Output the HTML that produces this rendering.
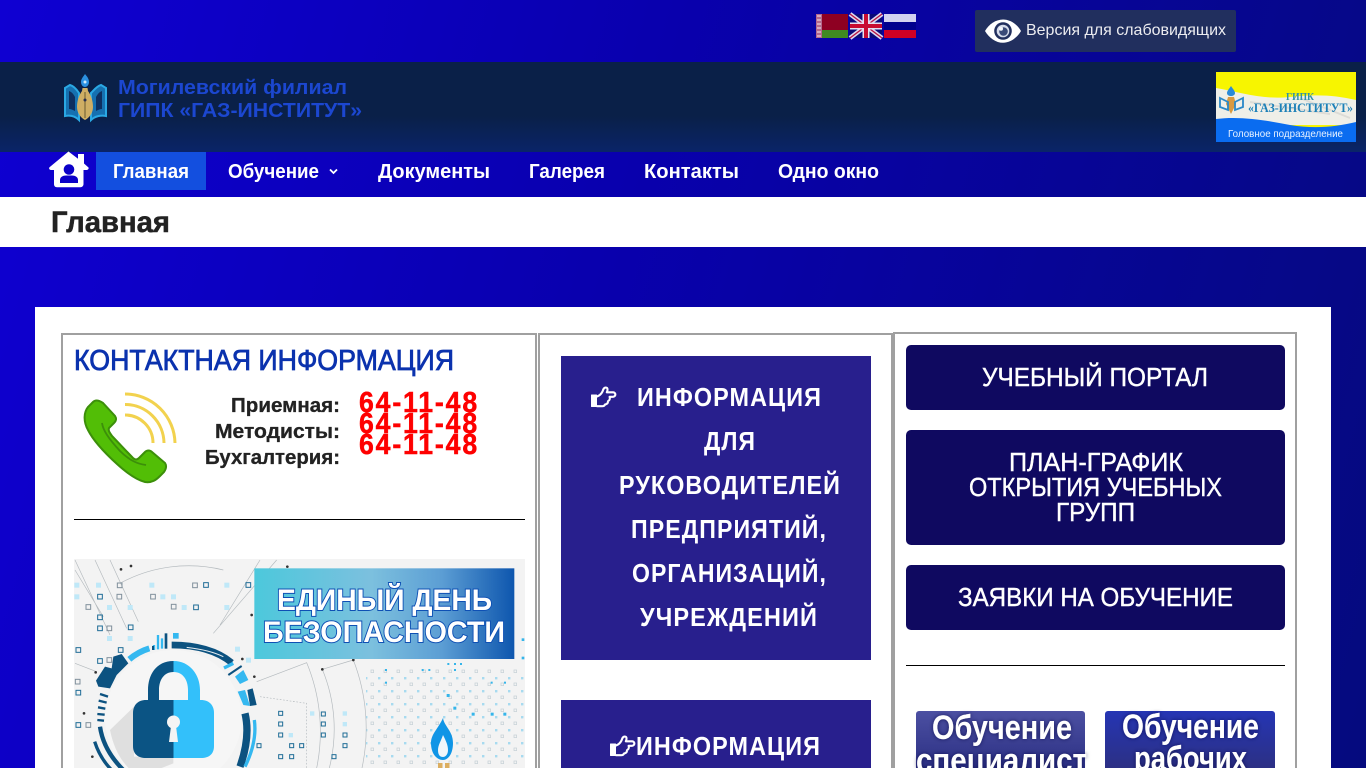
<!DOCTYPE html>
<html lang="ru"><head><meta charset="utf-8"><title>Главная</title>
<style>
html,body{margin:0;padding:0;width:1366px;height:768px;overflow:hidden}
body{position:relative;background:linear-gradient(105deg,#0f00d2 0%,#0900ae 42%,#050a7e 100%);font-family:"Liberation Sans",sans-serif}
.b{position:absolute;box-sizing:border-box}
svg.o{position:absolute;left:0;top:0}
svg text{font-family:"Liberation Sans",sans-serif}
</style></head><body>
<div class="b" style="left:975px;top:10px;width:261px;height:42px;background:#212f5e;border-radius:2px"></div>
<header class="b" style="left:0;top:62px;width:1366px;height:90px;background:linear-gradient(180deg,#0a2048 0%,#0a2048 60%,#0a2468 100%)"></header>
<nav class="b" style="left:96px;top:152px;width:110px;height:38px;background:#134fdf"></nav>
<div class="b" style="left:0;top:197px;width:1366px;height:50px;background:#fff"></div>
<main class="b" style="left:35px;top:307px;width:1296px;height:461px;background:#fff"></main>
<div class="b" style="left:61px;top:333px;width:476px;height:440px;border:2px solid #a0a0a0"></div>
<div class="b" style="left:538px;top:333px;width:355px;height:440px;border:2px solid #a0a0a0"></div>
<div class="b" style="left:893px;top:332px;width:404px;height:440px;border:2px solid #a0a0a0"></div>
<div class="b" style="left:74px;top:519px;width:451px;height:1px;background:#000"></div>
<div class="b" style="left:561px;top:356px;width:310px;height:304px;background:#281f8d"></div>
<div class="b" style="left:561px;top:700px;width:310px;height:68px;background:#281f8d"></div>
<div class="b" style="left:906px;top:345px;width:379px;height:65px;background:#0f0960;border-radius:5px"></div>
<div class="b" style="left:906px;top:430px;width:379px;height:115px;background:#0f0960;border-radius:5px"></div>
<div class="b" style="left:906px;top:565px;width:379px;height:65px;background:#0f0960;border-radius:5px"></div>
<div class="b" style="left:906px;top:665px;width:379px;height:1px;background:#000"></div>
<div class="b" style="left:916px;top:711px;width:169px;height:57px;background:linear-gradient(180deg,#4c50a2,#2c3084);border-radius:3px 3px 0 0"></div>
<div class="b" style="left:1105px;top:711px;width:170px;height:57px;background:linear-gradient(180deg,#2535b4,#2c3084);border-radius:3px 3px 0 0"></div>

<svg class="o" width="1366" height="768" viewBox="0 0 1366 768" xmlns="http://www.w3.org/2000/svg">
<defs>
<linearGradient id="ban" x1="0" x2="1" y1="0" y2="0"><stop offset="0" stop-color="#4cc8dc"/><stop offset=".45" stop-color="#7cc0de"/><stop offset=".72" stop-color="#5c9ed4"/><stop offset="1" stop-color="#0e56ae"/></linearGradient>
<clipPath id="imgc"><rect x="74" y="559" width="451" height="209"/></clipPath>
<clipPath id="bn"><rect x="1216" y="72" width="140" height="70"/></clipPath>
<filter id="gl" x="-10%" y="-30%" width="120%" height="160%"><feDropShadow dx="0" dy="0" stdDeviation="2" flood-color="#101040" flood-opacity=".7"/></filter>
<filter id="sb"><feGaussianBlur stdDeviation=".35"/></filter>
<pattern id="dots2" width="13" height="13" patternUnits="userSpaceOnUse"><rect x="1" y="1" width="2.400" height="2.400" fill="#35b5ea"/><rect x="7" y="7" width="2.600" height="2.600" fill="none" stroke="#7f99a8" stroke-width=".7"/></pattern>
<g id="hand" fill="none" stroke="#fff" stroke-linejoin="round" stroke-linecap="round">
<rect x="0.5" y="9" width="5" height="11.5" fill="#fff" stroke-width="1"/>
<path stroke-width="2.1" d="M6 10.5C9 9.500 10.500 7.500 11.500 5.500C12.200 3.500 12.800 1.500 14.800 1.500C16.800 1.600 17 3.800 15.800 6.300H22.300C25.200 6.600 25 10.600 22 10.800H18.600C19.400 12.800 18.400 14.600 17 15.200C17 17.200 15.800 18.200 14.200 18.400C13.400 20 12 20.400 10.400 20.200H6"/>
</g>
</defs>

<!-- flags -->
<rect x="816" y="14" width="32" height="16" fill="#8e0022"/><rect x="816" y="30" width="32" height="8" fill="#3f8a22"/>
<rect x="816" y="14" width="6" height="24" fill="#b4688c"/>
<path d="M817 16h4M817 20h4M817 24h4M817 28h4M817 32h4M817 36h4" stroke="#e8d0dc" stroke-width="1.2"/>
<rect x="850" y="14" width="32" height="24" fill="#0a0a78"/>
<path d="M850 14L882 38M882 14L850 38" stroke="#dcd8ee" stroke-width="4.500"/>
<path d="M850 14L882 38M882 14L850 38" stroke="#b81040" stroke-width="1.300"/>
<path d="M866 14V38M850 26H882" stroke="#e4e0f0" stroke-width="7"/>
<path d="M866 14V38M850 26H882" stroke="#c80c30" stroke-width="4"/>
<rect x="884" y="14" width="32" height="8" fill="#d2d2f0"/><rect x="884" y="22" width="32" height="8" fill="#00008e"/><rect x="884" y="30" width="32" height="8" fill="#d00024"/>

<!-- eye -->
<path d="M985 31C989 24 996 19.500 1003 19.500C1010 19.500 1017 24 1021 31C1017 38 1010 42.800 1003 42.800C996 42.800 989 38 985 31Z" fill="#fff"/>
<circle cx="1003" cy="31" r="8.800" fill="#212f5e"/><circle cx="1003" cy="31" r="6.300" fill="#d6dceb"/><circle cx="1003.500" cy="31.500" r="4.300" fill="#3a4a78"/><circle cx="1001" cy="28.800" r="2" fill="#f2f5fb"/>
<text x="1026" y="35" font-size="16" fill="#ececf0" textLength="200" lengthAdjust="spacingAndGlyphs">Версия для слабовидящих</text>

<!-- logo -->
<g>
<path d="M65 88L70 85C74 86 77 90 79 93V120C75 116 70 115 65 116Z" fill="#1670b0" stroke="#2aa8e4" stroke-width="2"/>
<path d="M106 88L101 85C97 86 94 90 91 93V120C95 116 101 115 106 116Z" fill="#1670b0" stroke="#2aa8e4" stroke-width="2"/>
<path d="M69 91C72 92 74 95 75 97V111C73 110 71 109 69 109Z" fill="#0e2f60"/>
<path d="M102 91C99 92 97 95 96 97V111C98 110 100 109 102 109Z" fill="#0e2f60"/>
<path d="M85 74C87.500 77 89 79 89 82C89 85 87 87 85 87C83 87 81 85 81 82C81 79 83 77 85 74Z" fill="#2b8fe0"/>
<circle cx="85" cy="82" r="1.500" fill="#cfe8fa"/>
<path d="M82.500 88H87.500L88 91C91 95 93 101 93 107C93 113 89 118 85 120C81 118 77 113 77 107C77 101 79 95 82 91Z" fill="#cfae64"/>
<path d="M85 92V118" stroke="#6a5a30" stroke-width="1"/><circle cx="85" cy="100" r="1.500" fill="#2a3050"/>
</g>
<g filter="url(#sb)">
<text x="118" y="94" font-size="20" font-weight="700" fill="#1a46d0" textLength="229" lengthAdjust="spacingAndGlyphs">Могилевский филиал</text>
<text x="118" y="117" font-size="20.500" font-weight="700" fill="#1a46d0" textLength="244" lengthAdjust="spacingAndGlyphs">ГИПК «ГАЗ-ИНСТИТУТ»</text>
</g>

<!-- right banner -->
<g clip-path="url(#bn)">
<rect x="1216" y="72" width="140" height="70" fill="#f7f500"/>
<path d="M1216 88C1240 92 1262 100 1290 97C1315 94 1335 95 1356 100V125H1216Z" fill="#efefe8"/>
<path d="M1250 102L1330 114M1300 98L1350 118" stroke="#d4d4d0" stroke-width="2" opacity=".7"/>
<path d="M1216 119C1240 116 1265 120 1290 125C1315 129 1335 127 1356 122V142H1216Z" fill="#0a6cf0"/>
<path d="M1231 86C1233 89 1235 91 1235 93C1235 95 1233 96 1231 96C1229 96 1227 95 1227 93C1227 91 1229 89 1231 86Z" fill="#2a8ad8"/>
<path d="M1228 97H1234L1236 104L1231 114L1226 104Z" fill="#d89a40"/>
<path d="M1220 98L1228 102V110L1220 107ZM1243 98L1235 102V110L1243 107Z" fill="none" stroke="#2a88c8" stroke-width="1.800"/>
<text x="1286" y="100" font-size="10" font-weight="700" fill="#2e90a8" style="font-family:'Liberation Serif',serif" textLength="28" lengthAdjust="spacingAndGlyphs">ГИПК</text>
<text x="1248" y="112" font-size="12.500" font-weight="700" fill="#1c80b8" style="font-family:'Liberation Serif',serif" textLength="105" lengthAdjust="spacingAndGlyphs">«ГАЗ-ИНСТИТУТ»</text>
<text x="1228" y="137" font-size="10.500" fill="#e8f2ff" textLength="115" lengthAdjust="spacingAndGlyphs">Головное подразделение</text>
</g>

<!-- home -->
<path d="M68.500 151.500L78 158.800V154H84V163.500L88.500 167.500C89 168.800 88 170 86.500 170H83.500V184C83.500 186 82 187.200 80.500 187.200H57C55 187.200 54 186 54 184V170H51C49.500 170 48.500 168.500 49.500 167.300Z" fill="#fff"/>
<circle cx="69" cy="169.500" r="5.300" fill="#0b00c8"/>
<path d="M60 183V180C60 177 63 175.500 66 175.500H72C75 175.500 78 177 78 180V183Z" fill="#0b00c8"/>

<!-- nav -->
<g font-size="20" font-weight="700" fill="#fff">
<text x="113" y="178" textLength="76" lengthAdjust="spacingAndGlyphs">Главная</text>
<text x="228" y="178" textLength="91" lengthAdjust="spacingAndGlyphs">Обучение</text>
<text x="378" y="178" textLength="112" lengthAdjust="spacingAndGlyphs">Документы</text>
<text x="529" y="178" textLength="76" lengthAdjust="spacingAndGlyphs">Галерея</text>
<text x="644" y="178" textLength="95" lengthAdjust="spacingAndGlyphs">Контакты</text>
<text x="778" y="178" textLength="101" lengthAdjust="spacingAndGlyphs">Одно окно</text>
</g>
<path d="M330 169.500L333.500 173L337 169.500" fill="none" stroke="#fff" stroke-width="1.800"/>

<text x="51" y="232" font-size="30" font-weight="700" fill="#222" stroke="#222" stroke-width=".5" textLength="119" lengthAdjust="spacingAndGlyphs">Главная</text>

<!-- contact -->
<text x="74" y="370" font-size="29" fill="#0b32ae" stroke="#0b32ae" stroke-width=".8" textLength="380" lengthAdjust="spacingAndGlyphs">КОНТАКТНАЯ ИНФОРМАЦИЯ</text>
<g fill="none" stroke="#f2d24e" stroke-width="3"><path d="M125 415A28 28 0 0 1 153 443"/><path d="M125 404.500A39 39 0 0 1 164 443"/><path d="M125 394A50 50 0 0 1 175 443"/></g>
<path d="M93 402C96 399 100 401 103 403L115 416C117 419 116 421 114 423L109 428C108 431 110 433 112 436L133 458C135 460 137 460 139 458L145 452C147 450 150 450 152 452L165 463C167 466 166 469 164 472L160 476C156 480 152 483 145 482C137 480 128 474 117 464C106 454 94 442 88 430C83 421 84 412 88 407Z" fill="#52be06" stroke="#3c8f0a" stroke-width="2"/>
<path d="M102 423C103 430 108 438 120 451C130 461 138 464 146 465" fill="none" stroke="#3c8f0a" stroke-width="1.800"/>
<g font-size="20.500" font-weight="700" fill="#222" stroke="#222" stroke-width=".3">
<text x="231" y="412" textLength="109" lengthAdjust="spacingAndGlyphs">Приемная:</text>
<text x="215" y="438" textLength="125" lengthAdjust="spacingAndGlyphs">Методисты:</text>
<text x="205" y="464" textLength="135" lengthAdjust="spacingAndGlyphs">Бухгалтерия:</text>
</g>
<g font-size="29" font-weight="700" fill="#fe0000" stroke="#fe0000" stroke-width=".5" style="letter-spacing:2px">
<text x="359" y="412" textLength="120" lengthAdjust="spacingAndGlyphs">64-11-48</text>
<text x="359" y="433" textLength="120" lengthAdjust="spacingAndGlyphs">64-11-48</text>
<text x="359" y="454" textLength="120" lengthAdjust="spacingAndGlyphs">64-11-48</text>
</g>

<!-- safety image -->
<g clip-path="url(#imgc)">
<rect x="74" y="559" width="451" height="209" fill="#f3f3f3"/>
<rect x="366" y="668" width="159" height="100" fill="url(#dots2)" opacity=".4"/>
<g transform="translate(60 550) scale(.33333)">
<g fill="none" stroke="#b4babe" stroke-width="2">
<path d="M787 358A470 470 0 0 1 808 654M880 330A566 566 0 0 1 906 654M590 395L740 338A540 540 0 0 1 770 654"/>
<path d="M105 30L200 235M45 30L150 255M150 30L235 215M650 30L460 250M600 30L480 225M180 100A430 430 0 0 1 490 60M787 358L880 330M45 60L130 200M45 340L110 365"/>
<path d="M600 440L740 460V654" stroke-dasharray="5 5"/>
</g>
<g fill="#333"><circle cx="183" cy="58" r="4"/><circle cx="213" cy="48" r="4"/><circle cx="682" cy="50" r="4"/><circle cx="575" cy="195" r="4"/><circle cx="547" cy="327" r="4"/><circle cx="583" cy="380" r="4"/><circle cx="787" cy="358" r="4"/><circle cx="880" cy="330" r="4"/><circle cx="107" cy="367" r="4"/><circle cx="72" cy="490" r="4"/><circle cx="97" cy="620" r="4"/></g>
<g fill="none" stroke="#80909c" stroke-width="3">
<rect x="172" y="99" width="14" height="14"/><rect x="171" y="133" width="14" height="14"/><rect x="272" y="133" width="14" height="14"/><rect x="398" y="99" width="14" height="14"/><rect x="334" y="163" width="14" height="14"/><rect x="78" y="164" width="14" height="14"/><rect x="141" y="228" width="14" height="14"/><rect x="141" y="323" width="14" height="14"/><rect x="46" y="388" width="14" height="14"/><rect x="78" y="518" width="14" height="14"/>
</g>
<g fill="none" stroke="#1e6c96" stroke-width="3">
<rect x="113" y="133" width="14" height="14"/><rect x="431" y="98" width="14" height="14"/><rect x="558" y="98" width="14" height="14"/><rect x="401" y="165" width="14" height="14"/><rect x="113" y="195" width="14" height="14"/><rect x="113" y="228" width="14" height="14"/><rect x="205" y="225" width="14" height="14"/><rect x="48" y="293" width="14" height="14"/><rect x="175" y="293" width="14" height="14"/><rect x="113" y="326" width="14" height="14"/><rect x="48" y="421" width="14" height="14"/><rect x="48" y="518" width="14" height="14"/><rect x="656" y="484" width="12" height="12"/><rect x="784" y="486" width="12" height="12"/><rect x="656" y="516" width="12" height="12"/><rect x="784" y="516" width="12" height="12"/><rect x="656" y="549" width="12" height="12"/><rect x="784" y="549" width="12" height="12"/><rect x="849" y="549" width="12" height="12"/><rect x="689" y="581" width="12" height="12"/><rect x="719" y="581" width="12" height="12"/><rect x="849" y="581" width="12" height="12"/><rect x="591" y="581" width="12" height="12"/><rect x="656" y="614" width="12" height="12"/><rect x="689" y="614" width="12" height="12"/><rect x="816" y="614" width="12" height="12"/>
</g>
<g fill="#bfe8f8">
<rect x="43" y="98" width="15" height="15"/><rect x="108" y="98" width="15" height="15"/><rect x="43" y="133" width="15" height="15"/><rect x="268" y="98" width="15" height="15"/><rect x="493" y="98" width="15" height="15"/><rect x="301" y="133" width="15" height="15"/><rect x="333" y="133" width="15" height="15"/><rect x="203" y="165" width="15" height="15"/><rect x="365" y="165" width="15" height="15"/><rect x="141" y="165" width="15" height="15"/><rect x="203" y="258" width="15" height="15"/><rect x="141" y="258" width="15" height="15"/><rect x="493" y="165" width="15" height="15"/><rect x="525" y="290" width="15" height="15"/><rect x="558" y="323" width="15" height="15"/><rect x="750" y="484" width="13" height="13"/><rect x="848" y="484" width="13" height="13"/><rect x="848" y="516" width="13" height="13"/><rect x="686" y="549" width="13" height="13"/>
</g>
<g fill="#35b5ea">
<rect x="975" y="357" width="6" height="6"/><rect x="1085" y="357" width="6" height="6"/><rect x="1105" y="357" width="6" height="6"/><rect x="1162" y="339" width="6" height="6"/><rect x="1182" y="339" width="6" height="6"/><rect x="1200" y="339" width="6" height="6"/><rect x="1182" y="357" width="6" height="6"/><rect x="975" y="395" width="6" height="6"/><rect x="1292" y="395" width="6" height="6"/><rect x="1332" y="395" width="6" height="6"/><rect x="1160" y="432" width="9" height="9"/><rect x="1180" y="470" width="9" height="9"/><rect x="1235" y="488" width="9" height="9"/><rect x="1292" y="488" width="9" height="9"/><rect x="1330" y="488" width="9" height="9"/><rect x="1385" y="265" width="8" height="8"/><rect x="1385" y="320" width="8" height="8"/>
</g>
<rect x="583" y="55" width="780" height="272" fill="url(#ban)"/>
<path d="M1363 280v45M1385 283v10" stroke="none"/>
<!-- dial -->
<path d="M335 285Q450 285 515 338" fill="none" stroke="#0c5280" stroke-width="20"/>
<path d="M380 292Q450 300 490 320" fill="none" stroke="#e8eef2" stroke-width="3"/>
<path d="M208 328Q235 305 268 295" fill="none" stroke="#34b8f0" stroke-width="18"/>
<path d="M282 300V285M294 298V255M306 296V265" stroke="#34b8f0" stroke-width="7"/><path d="M318 296V250" stroke="#0c5280" stroke-width="8"/><path d="M279 300V288" stroke="#0c5280" stroke-width="6"/>
<rect x="339" y="249" width="17" height="17" fill="#34b8f0"/>
<polygon points="108,392 135,350 155,355 160,320 185,312 205,340 170,375 150,415 115,410" fill="#0c5280"/>
<path d="M120 432L144 440M116 452L140 458M114 472L136 476M112 492L134 494M112 510L132 512" stroke="#0c5280" stroke-width="7"/>
<path d="M492 354L520 340" stroke="#34b8f0" stroke-width="10"/><path d="M505 375L545 348" stroke="#0c5280" stroke-width="6"/>
<polygon points="525,380 550,360 565,390 540,402" fill="#34b8f0"/>
<polygon points="533,425 555,420 570,468 550,465" fill="#34b8f0"/><polygon points="562,420 578,415 590,465 570,468" fill="#0c5280"/>
<path d="M555 490Q572 560 540 650" fill="none" stroke="#0c5280" stroke-width="22"/>
<path d="M583 510Q592 575 555 650" fill="none" stroke="#34b8f0" stroke-width="10"/>
<path d="M120 530Q130 600 190 660" fill="none" stroke="#0c5280" stroke-width="13"/>
<path d="M104 575Q120 625 155 660" fill="none" stroke="#0c5280" stroke-width="10"/>
<circle cx="340" cy="505" r="205" fill="#f6f6f6"/>
<path d="M222 470L150 540Q170 640 240 680L340 640V620H222Z" fill="#dfdfdf"/>
</g>
<path d="M173.500 661C156 661 148 675 148 690V702H159V690C159 680 164 672 173.500 672Z" fill="#0b5484"/>
<path d="M173.500 661C190 661 200 675 200 690V702H188V690C188 680 183 672 173.500 672Z" fill="#33c0fa"/>
<path d="M173.500 700H146C138 700 133 705 133 713V746C133 754 138 758 146 758H173.500Z" fill="#0b5484"/>
<path d="M173.500 700H201C209 700 214 705 214 713V746C214 754 209 758 201 758H173.500Z" fill="#33c0fa"/>
<circle cx="173.500" cy="722" r="6.500" fill="#f4f4f4"/><path d="M171 726H176L178 742H169Z" fill="#f4f4f4"/>
<path d="M443 718C444 726 453 731 453 743C453 754 448 760 443 760C437 760 431 754 431 743C431 734 438 729 443 718Z" fill="#0f95e6"/>
<path d="M443 735C446 741 448 745 448 750C448 755 445 757 443 757C440 757 438 755 438 750C438 745 441 741 443 735Z" fill="#f0f6fa"/>
<rect x="438" y="763" width="4.500" height="8" fill="#dcae60"/><rect x="445" y="763" width="4.500" height="8" fill="#dcae60"/>
<g font-size="30" font-weight="700" fill="#fff" stroke="#0e50b4" stroke-width="2" style="paint-order:stroke">
<text x="277" y="610" textLength="215" lengthAdjust="spacingAndGlyphs">ЕДИНЫЙ ДЕНЬ</text>
<text x="263" y="642" textLength="242" lengthAdjust="spacingAndGlyphs">БЕЗОПАСНОСТИ</text>
</g>
</g>

<!-- column 2 -->
<use href="#hand" x="591" y="386"/>
<g font-size="26" font-weight="700" fill="#fff" style="letter-spacing:1.200px">
<text x="637" y="406" textLength="185" lengthAdjust="spacingAndGlyphs">ИНФОРМАЦИЯ</text>
<text x="704" y="450" textLength="52" lengthAdjust="spacingAndGlyphs">ДЛЯ</text>
<text x="619" y="494" textLength="222" lengthAdjust="spacingAndGlyphs">РУКОВОДИТЕЛЕЙ</text>
<text x="631" y="538" textLength="196" lengthAdjust="spacingAndGlyphs">ПРЕДПРИЯТИЙ,</text>
<text x="632" y="582" textLength="195" lengthAdjust="spacingAndGlyphs">ОРГАНИЗАЦИЙ,</text>
<text x="640" y="626" textLength="178" lengthAdjust="spacingAndGlyphs">УЧРЕЖДЕНИЙ</text>
<text x="636" y="755" textLength="185" lengthAdjust="spacingAndGlyphs">ИНФОРМАЦИЯ</text>
</g>
<use href="#hand" x="610" y="735"/>

<!-- column 3 -->
<g font-size="26" fill="#fff" stroke="#fff" stroke-width=".4">
<text x="982" y="386" textLength="226" lengthAdjust="spacingAndGlyphs">УЧЕБНЫЙ ПОРТАЛ</text>
<text x="1009" y="471" textLength="174" lengthAdjust="spacingAndGlyphs">ПЛАН-ГРАФИК</text>
<text x="969" y="496" textLength="253" lengthAdjust="spacingAndGlyphs">ОТКРЫТИЯ УЧЕБНЫХ</text>
<text x="1056" y="521" textLength="79" lengthAdjust="spacingAndGlyphs">ГРУПП</text>
<text x="958" y="606" textLength="275" lengthAdjust="spacingAndGlyphs">ЗАЯВКИ НА ОБУЧЕНИЕ</text>
</g>
<g font-size="34" font-weight="700" fill="#fff" filter="url(#gl)">
<text x="932" y="739" textLength="140" lengthAdjust="spacingAndGlyphs">Обучение</text>
<text x="916" y="772" textLength="171" lengthAdjust="spacingAndGlyphs">специалист</text>
<text x="1122" y="738" textLength="137" lengthAdjust="spacingAndGlyphs">Обучение</text>
<text x="1134" y="770" textLength="113" lengthAdjust="spacingAndGlyphs">рабочих</text>
</g>
</svg>
</body></html>
